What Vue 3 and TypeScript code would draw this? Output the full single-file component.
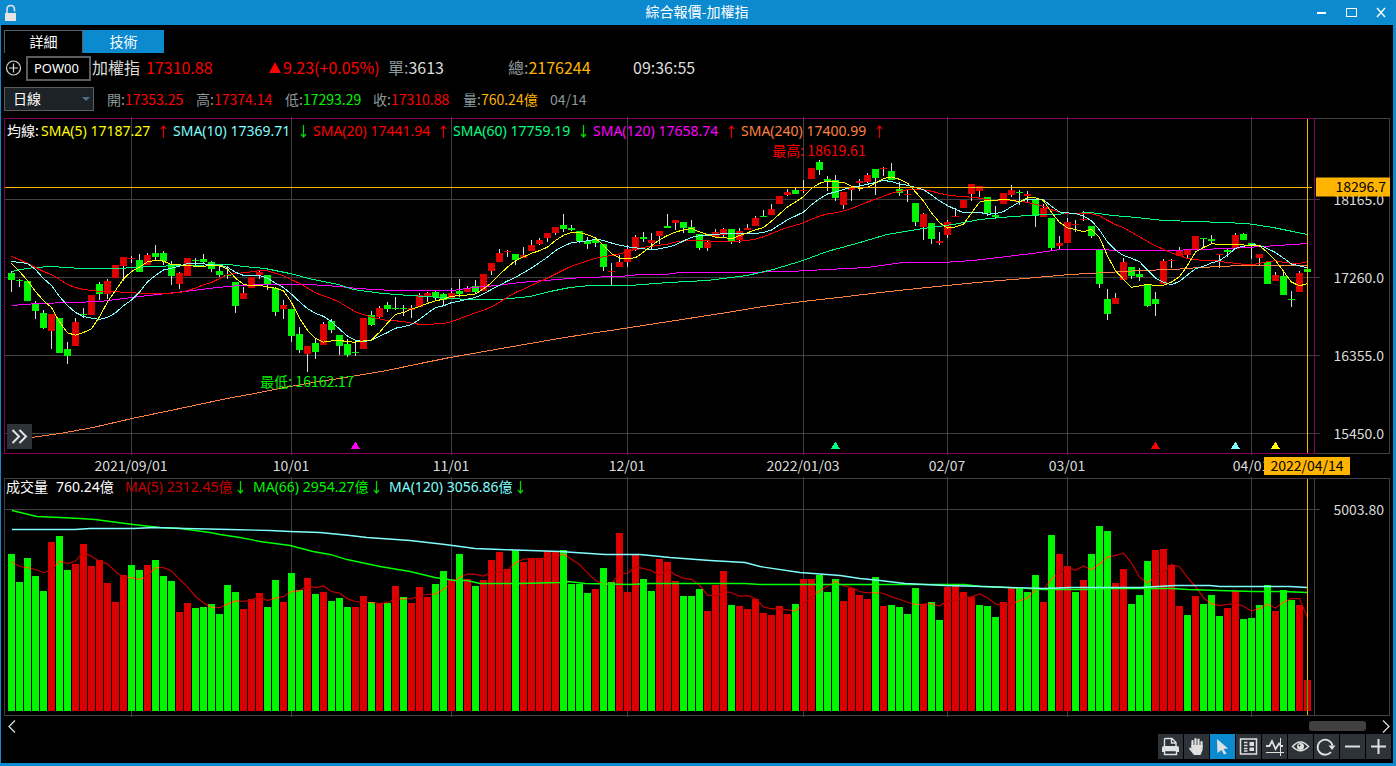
<script setup lang="ts">
import { ref } from 'vue'

type Point = [number, number]
interface Candle { up: boolean; top: number; bottom: number; high: number; low: number }
interface Bar { up: boolean; top: number }

const STEP = 8
const FIRST = 11.5
const left = 4
const span = 1386
const xOf = (i: number) => FIRST + i * STEP

// Each candle: direction, body top, body bottom, high, low (chart units)
const candleData = `
g273,280,271,292 g280,281,279,287 g281,301,281,301 g304,311,301,319 g313,328,310,329 r314,331,314,349
g318,353,318,353 g349,356,342,364 r322,346,318,346 g314,315,308,318 r295,315,295,315 g284,294,282,300
r281,294,279,299 r265,278,265,278 r257,266,257,281 r258,259,256,263 g260,272,254,272 r255,265,253,265
g253,257,245,260 g253,261,251,265 g264,276,261,285 r273,284,272,289 r258,276,258,276 g260,261,258,265
g259,262,254,263 g262,269,261,272 g271,275,266,277 g275,276,266,279 g282,306,282,313 r293,299,287,299
r277,288,277,288 r272,275,270,279 g275,285,275,290 g288,312,287,316 r305,309,300,319 g309,336,309,342
g334,350,327,353 r346,354,346,372 g343,352,338,359 r324,345,322,345 g321,330,319,333 g335,346,335,355
g344,355,339,357 g352,353,340,356 r318,349,318,349 g315,325,311,326 r308,317,306,318 g305,309,302,312
g308,309,297,310 g308,309,305,316 r308,310,305,318 r295,307,293,307 r293,296,292,302 g292,297,290,300
g294,300,293,305 r293,298,288,298 g291,294,279,297 r288,292,286,292 g286,292,280,294 r274,291,274,291
r263,271,263,275 r253,262,249,262 r251,252,250,257 g254,260,254,265 r255,258,247,258 r245,251,240,251
r240,244,238,245 r233,238,233,242 r227,233,227,235 g225,229,214,232 g228,230,225,231 g231,241,231,243
g241,244,237,249 g240,243,237,247 g244,267,244,271 r271,272,263,285 r262,267,255,267 r249,262,245,267
r237,250,235,251 g237,239,232,242 r240,243,233,249 r231,236,231,244 g226,228,214,228 r220,223,220,230
g222,228,222,233 g227,233,220,233 g234,248,234,250 r242,248,240,251 r232,237,229,237 r229,235,228,237
g229,241,229,244 r231,240,228,243 r228,230,224,230 r218,226,216,226 g216,217,210,217 r209,215,204,215
r196,204,196,204 r192,195,189,196 g190,194,188,194 r190,191,180,193 r168,179,168,179 g162,170,160,175
g179,181,176,191 g180,198,175,201 r192,205,192,209 r188,190,186,201 r181,183,179,191 r175,182,173,183
g169,178,169,195 r168,169,167,176 g171,180,163,180 g189,193,182,196 r194,195,189,202 g203,222,203,226
r214,227,213,240 g223,239,223,244 r241,243,232,245 r222,235,220,238 r216,217,208,217 r200,208,200,208
r184,194,184,201 r186,191,186,197 g197,213,197,216 g215,217,206,219 r193,204,193,204 r190,195,185,197
g192,193,190,205 r194,196,191,202 g199,216,199,227 r208,217,204,217 g218,248,218,250 r243,246,236,250
r222,243,218,243 r224,225,220,232 r219,220,211,221 g226,236,226,238 g250,284,250,288 g299,314,289,320
r298,304,293,304 r262,280,258,280 g267,276,267,279 g274,277,268,281 g285,306,285,307 g299,304,292,316
r261,284,259,284 r260,261,259,268 r250,256,247,256 r250,255,250,258 r236,250,236,250 g238,239,238,248
g239,241,235,244 r254,255,254,268 g250,252,248,257 r235,249,233,249 g234,240,233,240 g243,246,243,259
r254,258,254,265 g262,284,262,284 r275,281,272,281 g276,295,272,295 g299,300,291,307 r273,292,271,292
g269,272,269,272`

const volumeData = `
g554 g582 g558 g576 g591 r542 g536 g570 r564 r544 r566 r560 r583 r602 r575 g565 g570 r565 g560 g576
g581 r612 r603 g608 g607 g604 g614 g585 g592 r609 r599 r593 g607 g580 r602 g573 g590 r578 g594 r592
g601 g598 g607 r607 r596 g602 r603 g603 r586 g597 r603 r587 r597 g584 g571 r579 g554 r579 g586 r580
r560 r552 r569 g550 r562 r558 r558 r551 r551 g550 g584 g584 g593 r589 g568 g582 r533 r592 r555 g579
g591 r559 r562 r581 g596 g596 g589 r611 r585 r571 g605 r606 r609 r599 r613 r615 r606 r614 g604 r579
r579 g575 g592 g579 r601 r588 r595 r599 g577 r606 g605 g607 g614 g588 r604 g602 g620 r587 r586 r592
r597 g605 g606 g617 r602 r588 g588 g592 g575 r602 g535 r554 r566 g592 r580 g554 g526 g531 r583 r569
g604 g595 g561 r550 r549 r565 r606 g615 r596 g604 g595 g616 r608 r591 g619 g618 g605 g585 r611 g590
g600 r605 r680`

const candles: Candle[] = candleData.trim().split(/\s+/).map((s) => {
  const [top, bottom, high, low] = s.slice(1).split(',').map(Number)
  return { up: s[0] === 'r', top, bottom, high, low }
})
const bars: Bar[] = volumeData.trim().split(/\s+/).map((s) => ({ up: s[0] === 'r', top: Number(s.slice(1)) }))

function average(values: number[], size: number, head: number[]): string {
  return values
    .map((_, i) => {
      const y = i < head.length
        ? head[i]
        : values.slice(i - size + 1, i + 1).reduce((a, b) => a + b, 0) / size
      return `${xOf(i)},${(y + 0.5).toFixed(1)}`
    })
    .join(' ')
}
const path = (pts: Point[]) => pts.map(([x, y]) => `${x},${y + 0.5}`).join(' ')

const closes = candles.map((c) => (c.up ? c.top : c.bottom))
const priceLines = [
  {
    color: '#ff8040',
    points: path([[12, 440], [32, 437], [60, 433], [93, 427], [132, 418], [180, 408], [227, 398], [260, 392], [290, 386], [313, 382], [339, 378], [387, 370], [420, 363], [450, 357], [507, 347], [553, 339], [590, 333], [617, 329], [669, 321], [727, 312], [763, 306], [803, 301], [847, 296], [880, 292], [927, 287], [967, 283], [999, 280], [1013, 279], [1070, 274], [1107, 272], [1140, 270], [1173, 269], [1200, 267], [1240, 265], [1307, 265]]),
  },
  {
    color: '#ff00ff',
    points: path([[12, 305], [37, 303], [73, 302], [100, 301], [140, 296], [167, 293], [193, 290], [217, 287], [240, 285], [267, 284], [310, 284], [339, 286], [357, 288], [393, 290], [453, 290], [473, 287], [497, 285], [520, 282], [557, 279], [583, 277], [620, 276], [640, 274], [665, 274], [680, 272], [740, 272], [790, 271], [827, 269], [867, 267], [903, 262], [943, 262], [973, 260], [1007, 256], [1040, 252], [1060, 249], [1105, 249], [1113, 250], [1167, 250], [1200, 249], [1227, 248], [1263, 246], [1293, 244], [1307, 243]]),
  },
  {
    color: '#00ff80',
    points: path([[12, 271], [20, 269], [35, 267], [52, 266], [65, 267], [83, 268], [120, 268], [133, 267], [153, 266], [180, 265], [230, 264], [243, 266], [265, 268], [290, 273], [313, 279], [339, 284], [353, 289], [383, 293], [410, 295], [440, 297], [467, 299], [500, 299], [530, 296], [550, 291], [570, 287], [590, 285], [630, 285], [669, 282], [707, 280], [747, 275], [773, 269], [803, 260], [827, 251], [853, 244], [887, 234], [923, 228], [953, 224], [980, 219], [1013, 216], [1047, 214], [1075, 213], [1090, 212], [1113, 215], [1137, 217], [1163, 220], [1197, 221], [1247, 223], [1273, 227], [1293, 231], [1307, 234]]),
  },
  { color: '#ff0000', points: average(closes, 20, [256, 259, 263, 267, 271, 274, 279, 284, 287, 289, 290, 291, 291, 291, 292, 292, 293, 293, 293]) },
  { color: '#80ffff', points: average(closes, 10, [261, 262, 263, 269, 278, 285, 296, 305, 312]) },
  { color: '#ffff00', points: average(closes, 5, [263, 271, 280, 291]) },
]

const volumeFast = average(bars.map((b) => b.top), 5, [561, 566, 567, 569])
const volumeMid = path([[12, 510], [37, 516], [60, 517], [80, 518], [95, 519], [133, 524], [160, 527], [180, 528], [210, 532], [220, 534], [240, 537], [260, 541], [290, 545], [313, 551], [330, 554], [347, 559], [380, 566], [410, 571], [435, 577], [455, 580], [467, 580], [480, 583], [520, 583], [560, 582], [568, 581], [585, 583], [630, 584], [650, 583], [745, 583], [760, 584], [860, 584], [965, 584], [980, 586], [1007, 587], [1045, 589], [1092, 589], [1113, 588], [1171, 588], [1188, 589], [1219, 590], [1253, 591], [1284, 591], [1307, 592]])
const volumeSlow = path([[12, 529], [75, 529], [90, 528], [133, 528], [155, 527], [185, 528], [230, 529], [270, 530], [290, 531], [320, 532], [350, 535], [367, 537], [410, 540], [445, 544], [460, 546], [475, 548], [500, 549], [560, 551], [575, 552], [590, 553], [605, 554], [640, 554], [670, 557], [710, 560], [745, 562], [760, 566], [800, 572], [840, 575], [860, 578], [880, 580], [905, 583], [945, 585], [985, 586], [1010, 587], [1045, 588], [1070, 587], [1140, 587], [1175, 585], [1210, 585], [1220, 586], [1290, 586], [1307, 587]])

const gridX = [131, 291, 451, 627, 803, 947, 1067, 1251]
const dateNames = ['2021/09/01', '10/01', '11/01', '12/01', '2022/01/03', '02/07', '03/01', '04/01']
const dates = gridX.map((x, i) => ({ x, text: dateNames[i] }))
const levels = [
  { y: 199, text: '18165.0' },
  { y: 277, text: '17260.0' },
  { y: 355, text: '16355.0' },
  { y: 433, text: '15450.0' },
]
const signals = [
  { x: 355, color: '#ff00ff' },
  { x: 835, color: '#00ff80' },
  { x: 1155, color: '#ff0000' },
  { x: 1235, color: '#80ffff' },
  { x: 1275, color: '#ffff00' },
]
const leftPct = (x: number) => `${((x - left) / span) * 100}%`
const topPct = (y: number, top: number, height: number) => `${((y - top) / height) * 100}%`

const averages = [
  { cls: 'c-yellow', text: 'SMA(5) 17187.27', up: true },
  { cls: 'c-cyan', text: 'SMA(10) 17369.71', up: false },
  { cls: 'c-red', text: 'SMA(20) 17441.94', up: true },
  { cls: 'c-mint', text: 'SMA(60) 17759.19', up: false },
  { cls: 'c-magenta', text: 'SMA(120) 17658.74', up: true },
  { cls: 'c-orange', text: 'SMA(240) 17400.99', up: true },
]
const volumeAverages = [
  { cls: 'c-dark-red', text: 'MA(5) 2312.45億' },
  { cls: 'c-green', text: 'MA(66) 2954.27億' },
  { cls: 'c-cyan', text: 'MA(120) 3056.86億' },
]
const ohlc = [
  { label: '開', value: '17353.25', cls: 'c-red' },
  { label: '高', value: '17374.14', cls: 'c-red' },
  { label: '低', value: '17293.29', cls: 'c-green' },
  { label: '收', value: '17310.88', cls: 'c-red' },
  { label: '量', value: '760.24億', cls: 'c-amber' },
]
const tools = ['列印', '拖曳', '選取', '資訊', '畫線', '檢視', '重新整理', '縮小', '放大']
const activeTool = ref(2)
const activeTab = ref(1)
const tabs = ['詳細', '技術']
const symbol = ref('POW00')
const period = ref('日線')
</script>

<template>
  <main class="window">
    <header class="titlebar">
      <svg class="lock" width="12" height="18" viewBox="0 0 12 18" aria-hidden="true">
        <path d="M2 9V5.500C2 0 9.500 0 9.500 5.500V7.500" fill="none" stroke="#e4e4e4" stroke-width="1.500" />
        <rect x="0" y="9" width="11" height="8" fill="#e4e4e4" />
      </svg>
      <h1>綜合報價-加權指</h1>
      <div class="window-buttons">
        <button type="button" aria-label="最小化">
          <svg width="30" height="25" viewBox="0 0 30 25"><path d="M11 13H20" stroke="#fff" stroke-width="2" /></svg>
        </button>
        <button type="button" aria-label="最大化">
          <svg width="30" height="25" viewBox="0 0 30 25"><rect x="10.500" y="8.500" width="10" height="8" fill="none" stroke="#fff" /></svg>
        </button>
        <button type="button" aria-label="關閉">
          <svg width="30" height="25" viewBox="0 0 30 25"><path d="M11 8L19 17M19 8L11 17" stroke="#fff" stroke-width="1.400" /></svg>
        </button>
      </div>
    </header>

    <nav class="tabs">
      <button v-for="(t, i) in tabs" :key="t" type="button" :class="{ active: i === activeTab }" @click="activeTab = i">{{ t }}</button>
    </nav>

    <section class="quote">
      <button type="button" class="add" aria-label="新增">
        <svg width="17" height="16" viewBox="0 0 17 16"><circle cx="8.500" cy="8" r="7" fill="none" stroke="#d8d8d8" stroke-width="1.200" /><path d="M8.500 3.500V12.500M4 8H13" stroke="#d8d8d8" stroke-width="1.200" /></svg>
      </button>
      <input v-model="symbol" class="symbol" aria-label="商品代碼" />
      <span class="name">加權指</span>
      <span class="last c-red">17310.88</span>
      <span class="change c-red"><svg width="12" height="11" viewBox="0 0 12 11"><path d="M6 0L12 11H0Z" fill="#f00" /></svg>9.23(+0.05%)</span>
      <span class="single"><i>單:</i>3613</span>
      <span class="total c-amber"><i>總:</i>2176244</span>
      <time>09:36:55</time>
    </section>

    <section class="ohlc">
      <div class="period">
        <select v-model="period" aria-label="週期"><option>日線</option><option>週線</option><option>月線</option></select>
        <svg width="8" height="4" viewBox="0 0 8 4"><path d="M0 0H8L4 4Z" fill="#4d7086" /></svg>
      </div>
      <span v-for="o in ohlc" :key="o.label" class="item" :class="o.cls"><i>{{ o.label }}:</i>{{ o.value }}</span>
      <i>04/14</i>
    </section>

    <section class="panel price">
      <svg class="plot" viewBox="4 117 1386 338" preserveAspectRatio="none" shape-rendering="crispEdges">
        <g stroke="#404040" fill="none">
          <path v-for="l in levels" :key="l.y" :d="`M5 ${l.y + 0.5}H1320`" />
          <path d="M1314 118.500H1389.500V453.500H1314" />
        </g>
        <path d="M4.500 118.500H1314.500V453.500H4.500Z" fill="none" stroke="#80005a" />
        <path v-for="x in gridX" :key="x" :d="`M${x + 0.5} 117V455`" stroke="#404040" />
        <g v-for="(c, i) in candles" :key="i">
          <path :d="`M${xOf(i)} ${c.high}V${c.low}`" stroke="#dcdcdc" />
          <rect :x="xOf(i) - 3.5" :y="c.top" width="7" :height="c.bottom - c.top" :fill="c.up ? '#dd0000' : '#00f500'" />
        </g>
        <polyline v-for="l in priceLines" :key="l.color" :points="l.points" :stroke="l.color" fill="none" />
        <path v-for="s in signals" :key="s.x" :d="`M${s.x + 0.5} 441.500L${s.x + 5} 449H${s.x - 4}Z`" :fill="s.color" />
        <path d="M5 187.500H1312M1307.500 119V453" stroke="#ffb400" />
      </svg>
      <div class="legend sma">
        <span>均線:</span>
        <span v-for="a in averages" :key="a.text" :class="a.cls">{{ a.text }}
          <svg width="7" height="13" viewBox="0 0 7 13" :class="a.up ? 'up' : 'down'"><path :d="a.up ? 'M3.5 13V1M1 4L3.500 1L6 4' : 'M3.5 0V12M1 9L3.500 12L6 9'" /></svg>
        </span>
      </div>
      <span class="mark c-red" :style="{ left: leftPct(819), top: topPct(150, 117, 338) }">最高: 18619.61</span>
      <span class="mark c-green" :style="{ left: leftPct(307), top: topPct(381, 117, 338) }">最低: 16162.17</span>
      <span v-for="l in levels" :key="l.y" class="level" :style="{ top: topPct(l.y, 117, 338) }">{{ l.text }}</span>
      <span class="level cursor" :style="{ top: topPct(187, 117, 338) }">18296.7</span>
      <button type="button" class="expand" aria-label="展開">
        <svg width="25" height="25" viewBox="0 0 25 25"><path d="M5.500 6L12 12.500L5.500 19M12.500 6L19 12.500L12.500 19" fill="none" stroke="#e4e4e4" stroke-width="2" /></svg>
      </button>
    </section>

    <div class="dates">
      <span v-for="d in dates" :key="d.x" :style="{ left: leftPct(d.x) }">{{ d.text }}</span>
      <span class="cursor" :style="{ left: leftPct(1307) }">2022/04/14</span>
    </div>

    <section class="panel volume">
      <svg class="plot" viewBox="4 477 1386 241" preserveAspectRatio="none">
        <defs>
          <clipPath id="falling"><template v-for="(b, i) in bars" :key="i"><rect v-if="!b.up" :x="xOf(i) - 3.5" :y="b.top" width="7" :height="711 - b.top" /></template></clipPath>
        </defs>
        <g shape-rendering="crispEdges">
          <g stroke="#404040" fill="none">
            <path d="M4.500 478.500H1389.500V715.500H4.500ZM1314.500 478V716M5 509.500H1320" />
            <path v-for="x in gridX" :key="x" :d="`M${x + 0.5} 477V717`" />
          </g>
          <rect v-for="(b, i) in bars" :key="i" :x="xOf(i) - 3.5" :y="b.top" width="7" :height="711 - b.top" :fill="b.up ? '#dd0000' : '#00f500'" />
        </g>
        <g fill="none">
          <polyline :points="volumeFast" stroke="#c00000" stroke-width="1.200" />
          <polyline :points="volumeFast" stroke="#e09000" stroke-width="1.200" clip-path="url(#falling)" />
          <polyline :points="volumeMid" stroke="#00ff00" stroke-width="1.300" />
          <polyline :points="volumeSlow" stroke="#80ffff" stroke-width="1.300" />
        </g>
        <g shape-rendering="crispEdges">
          <path d="M1307.500 479V715" stroke="#ffb400" />
          <path d="M1307.500 680V711" stroke="#00c800" />
        </g>
      </svg>
      <div class="legend vol">
        <span>成交量</span><span>760.24億</span>
        <span v-for="a in volumeAverages" :key="a.text" :class="a.cls">{{ a.text }}<svg width="7" height="13" viewBox="0 0 7 13" class="down"><path d="M3.500 0V12M1 9L3.500 12L6 9" /></svg></span>
      </div>
      <span class="level" :style="{ top: topPct(509, 477, 241) }">5003.80</span>
    </section>

    <div class="scroll">
      <button type="button" aria-label="向左"><svg width="8" height="13" viewBox="0 0 8 13"><path d="M7 0.500L1 6.500L7 12.500" /></svg></button>
      <div class="track"><div class="thumb"></div></div>
      <button type="button" aria-label="向右"><svg width="8" height="13" viewBox="0 0 8 13"><path d="M1 0.500L7 6.500L1 12.500" /></svg></button>
    </div>

    <footer class="toolbar">
      <button v-for="(t, i) in tools" :key="t" type="button" :aria-label="t" :class="{ active: i === activeTool }" @click="activeTool = i">
        <svg width="25" height="25" viewBox="0 0 25 25" fill="none" stroke="#e0e0e0">
          <template v-if="i === 0">
            <path d="M6.500 12V5.500Q6.500 4.500 7.500 4.500H14L18 8.500V12M13.500 5V9H18" stroke-width="1.400" />
            <path d="M6 12H19Q21 12 21 14V18H4V14Q4 12 6 12Z" fill="#e0e0e0" stroke="none" />
            <path d="M6.500 16.500H18.500V20.500H6.500Z" fill="#2d3338" stroke-width="1.400" />
          </template>
          <template v-else-if="i === 1">
            <path d="M8.500 13V7M11.500 12V5M14.500 12V5.500M17.500 13V8" stroke-width="2.200" stroke-linecap="round" />
            <path d="M7.400 11H18.600V16L16.500 21H10L5.500 15.500Q4.500 13.500 6.500 13.500L7.400 14.500Z" fill="#e0e0e0" stroke="none" />
          </template>
          <path v-else-if="i === 2" d="M7 5L18 14.500L13.500 15L16.500 19.500L14 20.500L11.500 16L7.500 19Z" fill="#e0e0e0" stroke="none" />
          <template v-else-if="i === 3">
            <rect x="4.500" y="5" width="16" height="15" stroke-width="1.500" />
            <path d="M8 8.500H11.500M8 11.500H11.500M8 14.500H11.500M8 17H11.500" stroke-width="1.500" />
            <path d="M13.500 8H18V12H13.500ZM13.500 13.500H18V17H13.500Z" fill="#e0e0e0" stroke="none" />
          </template>
          <template v-else-if="i === 4">
            <path d="M4 12H7.500L10 7L13.500 15L17 9.500L19 12H21" stroke-width="1.800" />
            <path d="M18.500 4V22M4 18.500H22" />
          </template>
          <template v-else-if="i === 5">
            <path d="M4.500 12.500Q12.500 3.500 20.500 12.500Q12.500 21 4.500 12.500Z" stroke-width="1.500" />
            <circle cx="12.500" cy="12.500" r="3.500" fill="#e0e0e0" stroke="none" />
            <circle cx="11.500" cy="11.500" r="1" fill="#2d3338" stroke="none" />
          </template>
          <template v-else-if="i === 6">
            <path d="M17 18A7.500 7.500 0 1 1 18.500 11.500" stroke-width="1.800" />
            <path d="M14.500 11.500H21.500L18 16Z" fill="#e0e0e0" stroke="none" />
          </template>
          <path v-else-if="i === 7" d="M5 12.500H20" stroke-width="2" />
          <path v-else d="M5 12.500H20M12.500 5V20" stroke-width="2" />
        </svg>
      </button>
    </footer>
  </main>
</template>

<style>
html, body { background: #000; }
body { margin: 0; }
</style>

<style scoped>
.window {
  box-sizing: border-box;
  display: flex;
  flex-direction: column;
  height: 100vh;
  min-height: 560px;
  overflow: hidden;
  background: #000;
  border: solid #0c8acf;
  border-width: 0 3px 3px 1px;
  color: #dcdcdc;
  font: 14px/18px "Noto Sans CJK TC", "Noto Sans", sans-serif;
  white-space: nowrap;
}
button { padding: 0; border: 0; background: none; color: inherit; font: inherit; cursor: pointer; }
svg { display: block; }
i { font-style: normal; color: #8c989c; }
.c-red { color: #f00; }
.c-dark-red { color: #c80000; }
.c-green { color: #00f500; }
.c-mint { color: #00ff80; }
.c-yellow { color: #ff0; }
.c-cyan { color: #80ffff; }
.c-magenta { color: #f0f; }
.c-orange { color: #ff8040; }
.c-amber { color: #ffb400; }

.titlebar { display: grid; grid-template-columns: 90px 1fr 90px; align-items: center; flex: none; height: 25px; background: #0c8acf; }
.lock { margin-left: 4px; }
.titlebar h1 { margin: 0; padding-bottom: 3px; font-size: 14px; font-weight: 400; text-align: center; color: #fff; }
.window-buttons { display: flex; margin-right: -3px; margin-left: 3px; }

.tabs { display: flex; flex: none; height: 23px; margin: 5px 3px 0; }
.tabs button { box-sizing: border-box; width: 79px; padding-bottom: 2px; border: 1px solid #5a5e60; border-bottom: 0; color: #fff; }
.tabs .active { width: 81px; background: #0c8acf; border-color: #0c8acf; }

.quote { display: grid; grid-template-columns: 21px 66px 54px 123px 119px 120px 125px 1fr; align-items: center; flex: none; height: 25px; margin: 2px 3px 0 4px; font-size: 16px; }
.quote > span, .quote > time { padding-bottom: 2px; line-height: 24px; }
.symbol { box-sizing: border-box; width: 65px; height: 25px; padding: 0 6px; border: 2px solid #5a5e60; border-radius: 0; background: #000; color: #fff; font: 13px "Noto Sans", sans-serif; }
.change { display: flex; align-items: center; gap: 2px; }

.ohlc { display: grid; grid-template-columns: 103px 89px 89px 88px 90px 87px 1fr; align-items: center; flex: none; height: 24px; margin: 7px 3px 6px; }
.period { position: relative; width: 90px; }
.period select { box-sizing: border-box; display: block; width: 90px; height: 24px; padding: 0 8px 2px; appearance: none; border: 1px solid #5a5e60; border-radius: 0; background: #1c2225; color: #fff; font: inherit; line-height: 20px; }
.period svg { position: absolute; right: 4px; top: 10px; pointer-events: none; }

.panel { position: relative; min-height: 0; margin: 0 3px; }
.price { flex: 338 1 0; }
.volume { flex: 241 1 0; }
.plot { width: 100%; height: 100%; }
.legend { position: absolute; top: 5px; left: 3px; display: grid; font-family: "Noto Sans", "Noto Sans CJK TC", sans-serif; }
.sma { grid-template-columns: 34px 132px 140px 140px 140px 148px 148px; }
.vol { top: 1px; left: 2px; grid-template-columns: 50px 69px 128px 136px 136px; color: #fff; }
.legend > span { display: flex; align-items: center; justify-content: space-between; padding-right: 6px; }
.sma > span:first-child { color: #fff; }
.vol > span { justify-content: flex-start; gap: 4px; padding: 0; }
.legend svg { fill: none; stroke-width: 1.200; }
.up { stroke: #dd0000; }
.down { stroke: #00dd00; }
.mark { position: absolute; transform: translate(-50%, -50%); }
.level { position: absolute; right: 6px; transform: translateY(-50%); }
.level.cursor { right: 0; box-sizing: border-box; width: 74px; height: 19px; padding-right: 4px; line-height: 17px; text-align: right; background: #ffb400; color: #000; }

.dates { position: relative; flex: none; height: 22px; margin: 0 3px; }
.dates span { position: absolute; top: 1px; transform: translateX(-50%); }
.dates .cursor { top: 2px; box-sizing: border-box; width: 86px; line-height: 16px; padding-bottom: 2px; text-align: center; background: #ffb400; color: #000; }

.scroll { display: flex; align-items: center; flex: none; height: 16px; margin: 0 3px 0 7px; }
.scroll button svg { fill: none; stroke: #dcdcdc; stroke-width: 1.300; }
.track { display: flex; justify-content: flex-end; flex: 1; padding-right: 16px; }
.thumb { width: 57px; height: 10px; border-radius: 3px; background: #404040; }

.toolbar { display: flex; justify-content: flex-end; gap: 1px; flex: none; height: 25px; margin: 0 2px 4px; }
.toolbar button { width: 25px; background: #2d3338; }
.toolbar .active { background: #0c8acf; }
.expand { position: absolute; left: 3px; bottom: 6px; background: #2d3338; }
</style>
